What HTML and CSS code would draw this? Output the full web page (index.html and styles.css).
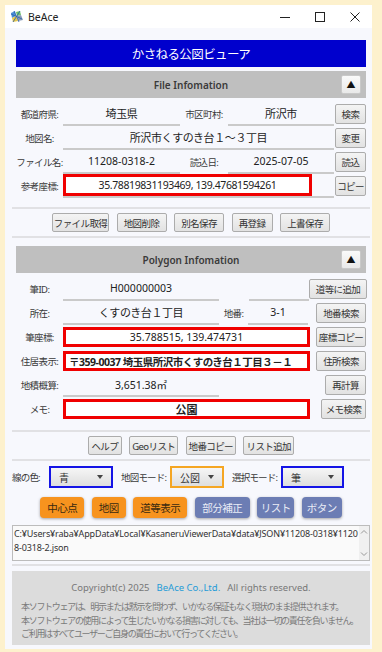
FILE: index.html
```html
<!DOCTYPE html>
<html lang="ja">
<head>
    <meta charset="UTF-8">
    <meta name="viewport" content="width=device-width, initial-scale=1.0">
    <title>BeAce - かさねる公図ビューア</title>
    <link rel="stylesheet" href="styles.css">
</head>
<body>

<div class="window">
    <div class="titlebar">
        <svg class="app-icon" width="14" height="13" viewBox="0 0 14 13">
            <path d="M1 3 L5 1 L6 6 L2 8 Z" fill="#4a8fd8"/>
            <path d="M6 2 L10 1 L11 5 L7 6 Z" fill="#6cc06a"/>
            <path d="M2 8 L6 6 L8 11 L3 12 Z" fill="#e8c84a"/>
            <path d="M7 6 L11 5 L13 10 L8 11 Z" fill="#8a9bb8"/>
            <path d="M1 4 L12 9 M4 1 L9 12 M10 1 L3 12" stroke="#2a5fa8" stroke-width="0.8" fill="none"/>
        </svg>
        <span class="app-name">BeAce</span>
        <div class="win-ctrls">
            <span class="win-btn"><svg width="10" height="10" viewBox="0 0 10 10"><line x1="0" y1="5.5" x2="10" y2="5.5" stroke="#222" stroke-width="1"/></svg></span>
            <span class="win-btn"><svg width="10" height="10" viewBox="0 0 10 10"><rect x="0.5" y="0.5" width="9" height="9" fill="none" stroke="#222" stroke-width="1"/></svg></span>
            <span class="win-btn"><svg width="10" height="10" viewBox="0 0 10 10"><path d="M0.5 0.5 L9.5 9.5 M9.5 0.5 L0.5 9.5" stroke="#222" stroke-width="1"/></svg></span>
        </div>
    </div>

    <div class="main">
        <div class="app-title">かさねる公図ビューア</div>

        <!-- ファイル情報 -->
        <div class="section-bar">
            <span></span>
            <span class="section-name">File Infomation</span>
            <button class="collapse">▲</button>
        </div>
        <div class="fields">
            <div class="row">
                <span class="lbl">都道府県:</span>
                <span class="field f-117">埼玉県</span>
                <span class="lbl lbl-48">市区町村:</span>
                <span class="field f-106">所沢市</span>
                <button class="btn b-31">検索</button>
            </div>
            <div class="row">
                <span class="lbl">地図名:</span>
                <span class="field f-271">所沢市くすのき台１～３丁目</span>
                <button class="btn b-31">変更</button>
            </div>
            <div class="row">
                <span class="lbl">ファイル名:</span>
                <span class="field f-117 latin">11208-0318-2</span>
                <span class="lbl lbl-48">読込日:</span>
                <span class="field f-106 latin">2025-07-05</span>
                <button class="btn b-31">読込</button>
            </div>
            <div class="row">
                <span class="lbl">参考座標:</span>
                <span class="field f-271 left">
                    <span class="redbox rb-file">35.78819831193469, 139.47681594261</span>
                </span>
                <button class="btn b-31">コピー</button>
            </div>
        </div>

        <div class="sep sep-after-fields"></div>
        <div class="btn-bar">
            <button class="btn b-57">ファイル取得</button>
            <button class="btn b-50">地図削除</button>
            <button class="btn b-50">別名保存</button>
            <button class="btn b-41">再登録</button>
            <button class="btn b-50">上書保存</button>
        </div>
        <div class="sep"></div>

        <!-- ポリゴン情報 -->
        <div class="section-bar section-gap">
            <span></span>
            <span class="section-name">Polygon Infomation</span>
            <button class="collapse">▲</button>
        </div>
        <div class="fields">
            <div class="row">
                <span class="lbl">筆ID:</span>
                <span class="field f-156 latin">H000000003</span>
                <span class="spacer-30"></span>
                <span class="field f-60"></span>
                <button class="btn b-58">道等に追加</button>
            </div>
            <div class="row">
                <span class="lbl">所在:</span>
                <span class="field f-156">くすのき台１丁目</span>
                <span class="lbl lbl-29">地番:</span>
                <span class="field f-60 latin">3-1</span>
                <button class="btn b-50">地番検索</button>
            </div>
            <div class="row">
                <span class="lbl">筆座標:</span>
                <span class="redbox rb-poly">35.788515, 139.474731</span>
                <button class="btn b-50">座標コピー</button>
            </div>
            <div class="row">
                <span class="lbl">住居表示:</span>
                <span class="redbox rb-poly address">〒359-0037 埼玉県所沢市くすのき台１丁目３－１</span>
                <button class="btn b-50">住所検索</button>
            </div>
            <div class="row">
                <span class="lbl">地積概算:</span>
                <span class="field f-156 latin">3,651.38㎡</span>
                <button class="btn b-41">再計算</button>
            </div>
            <div class="row">
                <span class="lbl">メモ:</span>
                <span class="redbox rb-poly bold">公園</span>
                <button class="btn b-45">メモ検索</button>
            </div>
        </div>

        <div class="sep sep-after-poly"></div>
        <div class="btn-bar">
            <button class="btn b-34">ヘルプ</button>
            <button class="btn b-49">Geoリスト</button>
            <button class="btn b-50">地番コピー</button>
            <button class="btn b-51">リスト追加</button>
        </div>
        <div class="sep"></div>

        <div class="mode-row">
            <span class="mode-lbl m-29">線の色:</span>
            <div class="combo combo-blue c-64"><span>青</span><i class="arrow"></i></div>
            <span class="mode-lbl m-41">地図モード:</span>
            <div class="combo combo-orange c-54"><span>公図</span><i class="arrow"></i></div>
            <span class="mode-lbl m-41">選択モード:</span>
            <div class="combo combo-blue c-63"><span>筆</span><i class="arrow"></i></div>
        </div>

        <div class="action-row">
            <button class="act orange a-44">中心点</button>
            <button class="act orange a-34">地図</button>
            <button class="act orange a-54">道等表示</button>
            <button class="act slate a-55">部分補正</button>
            <button class="act slate a-37">リスト</button>
            <button class="act slate a-40">ボタン</button>
        </div>

        <div class="path-box">
            <div class="path-text">C:¥Users¥raba¥AppData¥Local¥KasaneruViewerData¥data¥JSON¥11208-0318¥11208-0318-2.json</div>
            <div class="scrollbar">
                <svg width="8" height="6" viewBox="0 0 8 6"><path d="M1 4.5 L4 1.5 L7 4.5" stroke="#999" fill="none"/></svg>
                <svg width="8" height="6" viewBox="0 0 8 6"><path d="M1 1.5 L4 4.5 L7 1.5" stroke="#999" fill="none"/></svg>
            </div>
        </div>
        <div class="sep sep-thin"></div>

        <div class="footer">
            <div class="copyright">Copyright(c) 2025<span class="company">BeAce Co.,Ltd.</span>All rights reserved.</div>
            <div class="disclaimer">
                本ソフトウェアは、明示または黙示を問わず、いかなる保証もなく現状のまま提供されます。<br>
                本ソフトウェアの使用によって生じたいかなる損害に対しても、当社は一切の責任を負いません。<br>
                ご利用はすべてユーザーご自身の責任において行ってください。
            </div>
        </div>
    </div>
</div>

</body>
</html>
```

FILE: styles.css
```css
body {
    margin: 0;
    background-color: #fdf1cd;
    font-family: "Noto Sans", "Noto Sans CJK JP", sans-serif;
    color: #333;
}
button {
    font-family: inherit;
    padding: 0;
    cursor: pointer;
}
.window {
    margin: 5px 0 0 5px;
    width: 367px;
    height: 644px;
    background-color: #f7f8fd;
    overflow: hidden;
}

/* タイトルバー */
.titlebar {
    height: 23px;
    background-color: #fff;
    display: flex;
    align-items: center;
}
.app-icon {
    margin-left: 5px;
}
.app-name {
    margin-left: 4px;
    font-size: 10.5px;
    color: #222;
}
.win-ctrls {
    margin-left: auto;
    display: flex;
}
.win-btn {
    width: 35px;
    height: 23px;
    display: flex;
    align-items: center;
    justify-content: center;
}

.main {
    padding: 12px 2px 0 7px;
}
.app-title {
    margin: 0 4px;
    height: 27px;
    background-color: #0000cd;
    color: #fff;
    font-size: 12.5px;
    letter-spacing: -0.6px;
    display: flex;
    align-items: center;
    justify-content: center;
}
.section-bar {
    margin: 4px 4px 0;
    height: 27px;
    background-color: #bfbfbf;
    display: grid;
    grid-template-columns: 1fr auto 1fr;
    align-items: center;
}
.section-gap {
    margin-top: 8px;
}
.section-name {
    font-size: 10px;
    font-weight: 600;
    color: #3a3a3a;
}
.collapse {
    justify-self: end;
    margin-right: 5px;
    width: 20px;
    height: 19px;
    border: 1px solid #c9c9c9;
    border-radius: 2px;
    background: linear-gradient(#fafafa, #e9e9e9);
    font-size: 9px;
    color: #111;
    line-height: 17px;
}

/* 入力行 */
.fields {
    padding: 4px 4px 0;
}
.row {
    display: flex;
    align-items: center;
    height: 24px;
}
.lbl {
    width: 47px;
    flex-shrink: 0;
    text-align: center;
    font-size: 9.5px;
    letter-spacing: -0.6px;
    color: #3a3a3a;
}
.lbl-48 { width: 48px; }
.lbl-29 { width: 29px; }
.field {
    height: 24px;
    box-sizing: border-box;
    border-bottom: 2px solid #cacaca;
    display: flex;
    align-items: center;
    justify-content: center;
    font-size: 11px;
    letter-spacing: -0.4px;
    color: #222;
    flex-shrink: 0;
}
.field.latin {
    font-size: 10.5px;
    letter-spacing: 0;
}
.field.left {
    justify-content: flex-start;
    align-items: flex-end;
}
.f-60 { width: 60px; }
.f-106 { width: 106px; }
.f-117 { width: 117px; }
.f-156 { width: 156px; }
.f-271 { width: 271px; }
.spacer-30 {
    width: 30px;
    flex-shrink: 0;
}

.redbox {
    box-sizing: border-box;
    border: 3px solid #f00000;
    background-color: #fff;
    display: flex;
    align-items: center;
    justify-content: center;
    font-size: 10.5px;
    color: #222;
    flex-shrink: 0;
}
.rb-file {
    width: 249px;
    height: 22px;
}
.rb-poly {
    width: 247px;
    height: 20px;
}
.redbox.address {
    justify-content: flex-start;
    padding-left: 3px;
    font-weight: 700;
    font-size: 10.5px;
    letter-spacing: -0.5px;
}
.redbox.bold {
    font-weight: 700;
    font-size: 11px;
}

.btn {
    height: 20px;
    box-sizing: border-box;
    border: 1px solid #acacac;
    border-radius: 2px;
    background: linear-gradient(#f4f4f4, #e2e2e2);
    font-size: 9.5px;
    letter-spacing: -0.6px;
    color: #333;
    flex-shrink: 0;
}
.row .btn {
    margin-left: auto;
}
.b-31 { width: 31px; }
.b-34 { width: 34px; }
.b-41 { width: 41px; }
.b-45 { width: 45px; }
.b-49 { width: 49px; }
.b-50 { width: 50px; }
.b-51 { width: 51px; }
.b-57 { width: 57px; }
.b-58 { width: 58px; }

.sep {
    height: 2px;
    background-color: #e1e1e4;
    margin-top: 4px;
}
.sep-after-fields {
    margin-top: 9px;
}
.sep-after-poly {
    margin-top: 9px;
}
.sep-thin {
    margin-top: 3px;
}
.btn-bar {
    margin-top: 4px;
    display: flex;
    justify-content: center;
    gap: 7.5px;
}
.btn-bar .btn {
    height: 19px;
}

/* モード選択 */
.mode-row {
    margin-top: 5px;
    display: flex;
    align-items: center;
    gap: 8px;
}
.mode-lbl {
    font-size: 9.5px;
    letter-spacing: -0.8px;
    color: #3a3a3a;
    white-space: nowrap;
}
.m-29 { width: 29px; }
.m-41 { width: 41px; }
.combo {
    height: 22px;
    box-sizing: border-box;
    background: linear-gradient(#f6f6f6, #dedede);
    display: flex;
    align-items: center;
    padding: 0 8px;
    font-size: 10px;
    color: #333;
}
.combo-blue {
    border: 2px solid #1414e6;
}
.combo-orange {
    border: 2px solid #f5a623;
}
.arrow {
    margin-left: auto;
    width: 0;
    height: 0;
    border-left: 3.5px solid transparent;
    border-right: 3.5px solid transparent;
    border-top: 4px solid #444;
}
.c-54 { width: 54px; }
.c-63 { width: 63px; }
.c-64 { width: 64px; }

.action-row {
    margin-top: 9px;
    display: flex;
    justify-content: center;
    gap: 7.5px;
}
.act {
    height: 21px;
    border: none;
    border-radius: 4px;
    font-size: 10.5px;
    letter-spacing: -0.5px;
    box-shadow: 0 1px 3px rgba(0, 0, 0, 0.35);
}
.orange {
    background-color: #f7931e;
    color: #3a2a10;
}
.slate {
    background-color: #6c7db4;
    color: #e9ecf6;
}
.a-34 { width: 34px; }
.a-37 { width: 37px; }
.a-40 { width: 40px; }
.a-44 { width: 44px; }
.a-54 { width: 54px; }
.a-55 { width: 55px; }

.path-box {
    margin-top: 7px;
    height: 36px;
    box-sizing: border-box;
    border: 1px solid #bcbcbc;
    background-color: #fafafa;
    display: flex;
}
.path-text {
    flex: 1;
    padding: 1px 1px 0 1px;
    font-size: 9px;
    line-height: 14px;
    letter-spacing: -0.15px;
    word-break: break-all;
    color: #333;
}
.scrollbar {
    width: 10px;
    background-color: #f0f0f0;
    display: flex;
    flex-direction: column;
    justify-content: space-between;
    align-items: center;
    padding: 3px 0;
}

/* フッター */
.footer {
    margin-top: 5px;
    height: 74px;
    background-color: #dcdcdc;
    overflow: hidden;
}
.copyright {
    padding-top: 10px;
    text-align: center;
    font-size: 9.5px;
    line-height: 13px;
    color: #777;
}
.company {
    color: #1f9bd7;
    margin: 0 7px;
}
.disclaimer {
    margin-top: 6px;
    padding-left: 9px;
    font-size: 9px;
    line-height: 13.5px;
    letter-spacing: -1.3px;
    color: #7a7a7a;
    white-space: nowrap;
}
```
